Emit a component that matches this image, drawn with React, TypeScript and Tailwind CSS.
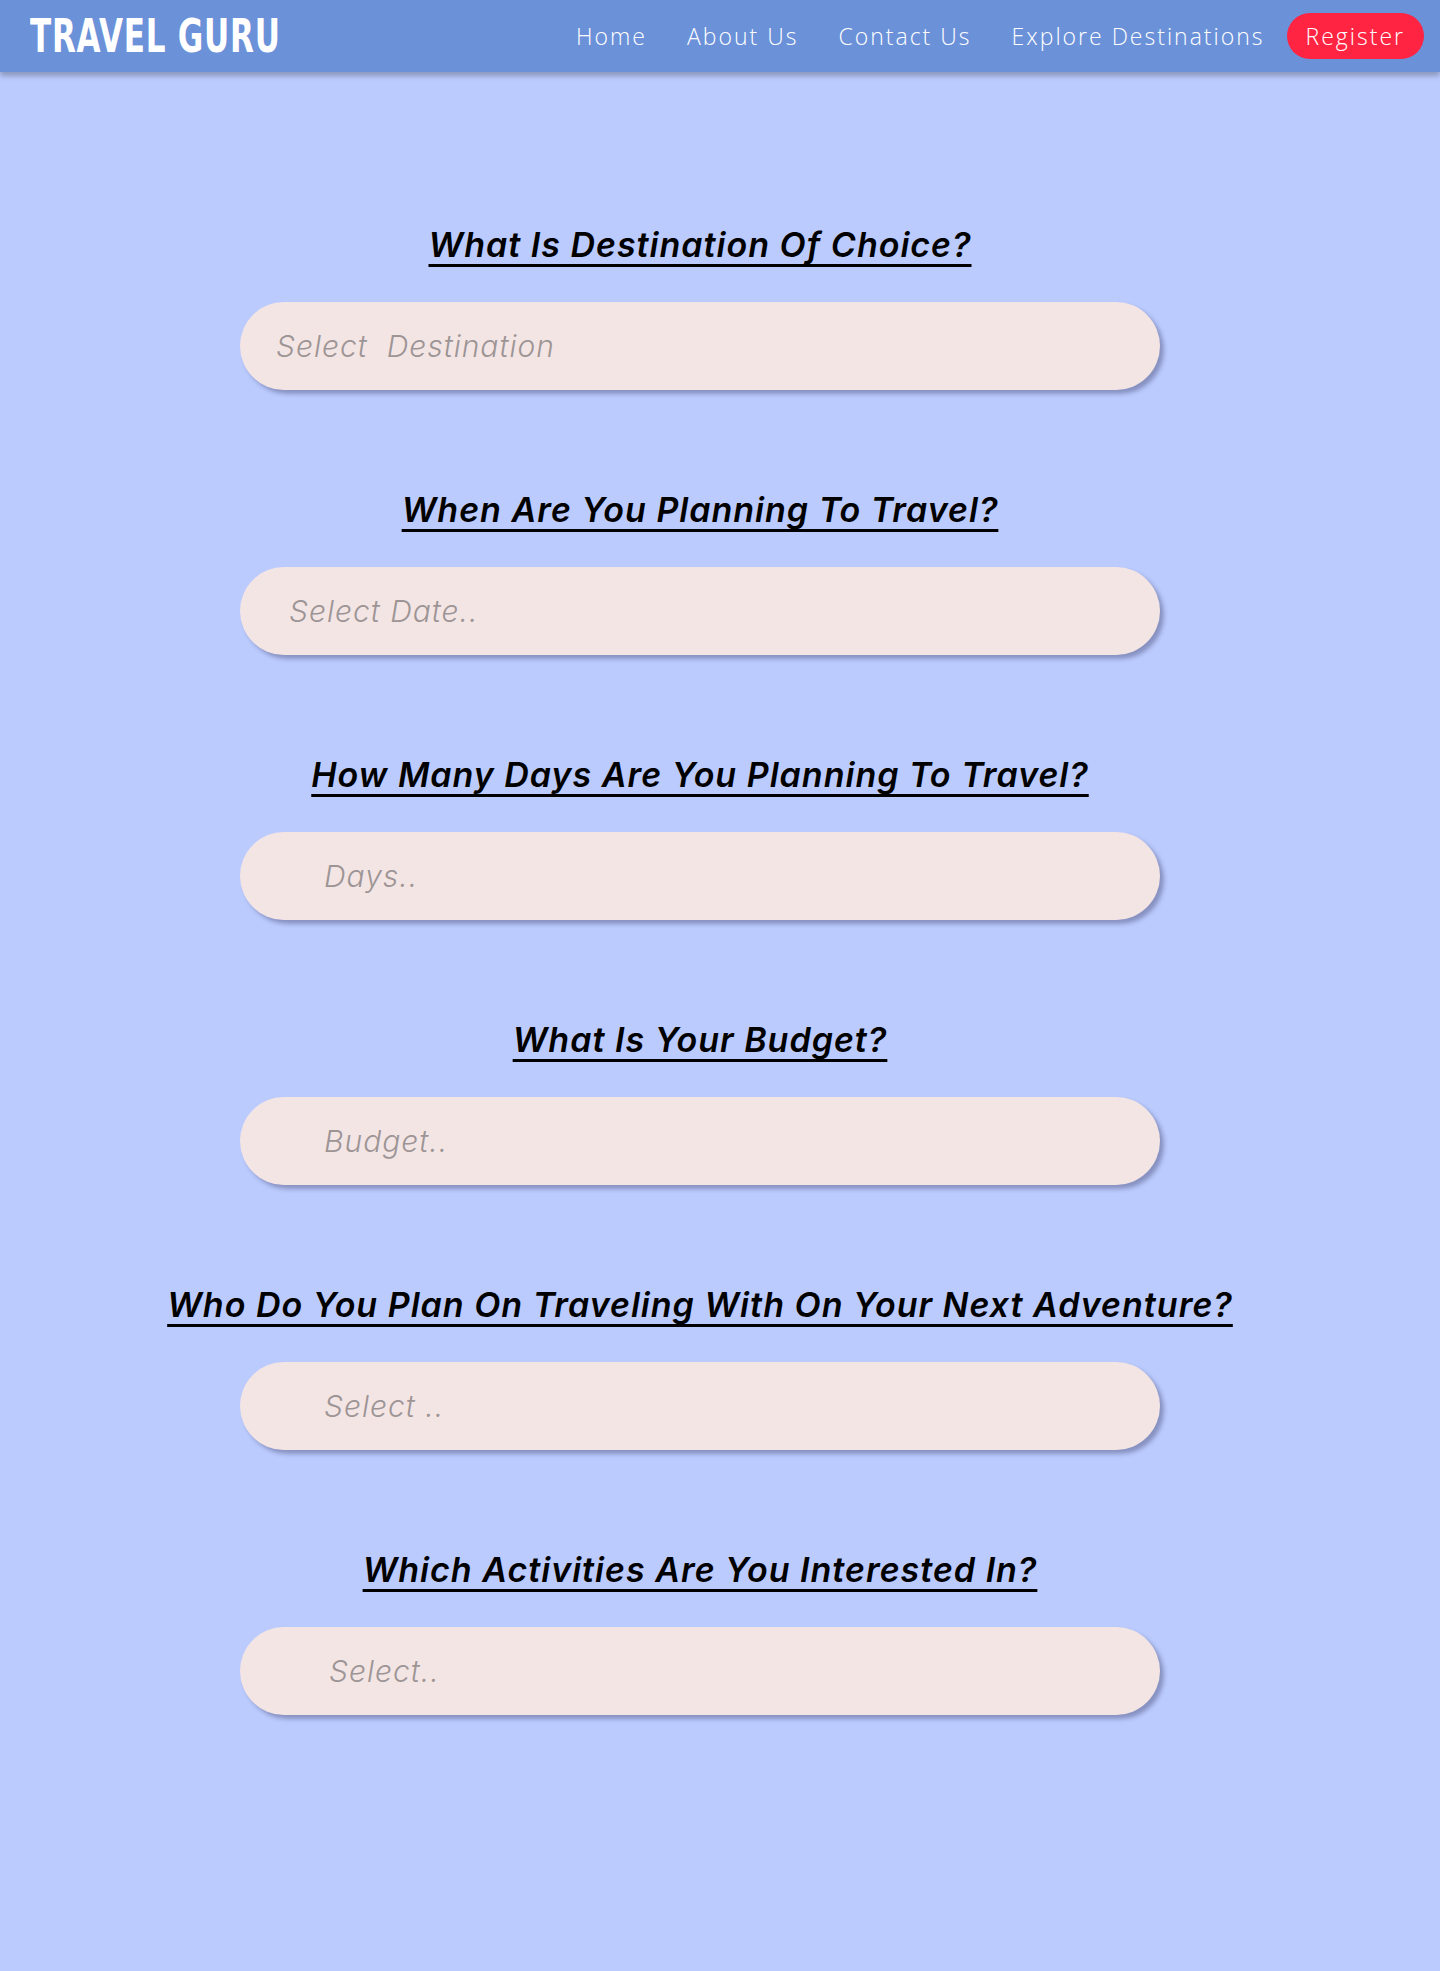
import React from "react";

type Question = {
  title: string;
  placeholder: string;
  pad: string;
};

const questions: Question[] = [
  { title: "What Is Destination Of Choice?", placeholder: "Select  Destination", pad: "pl-[36px]" },
  { title: "When Are You Planning To Travel?", placeholder: "Select Date..", pad: "pl-[49px]" },
  { title: "How Many Days Are You Planning To Travel?", placeholder: "Days..", pad: "pl-[84px]" },
  { title: "What Is Your Budget?", placeholder: "Budget..", pad: "pl-[84px]" },
  { title: "Who Do You Plan On Traveling With On Your Next Adventure?", placeholder: "Select ..", pad: "pl-[84px]" },
  { title: "Which Activities Are You Interested In?", placeholder: "Select..", pad: "pl-[89px]" },
];

const links = ["Home", "About Us", "Contact Us", "Explore Destinations"];

function Navbar() {
  return (
    <header className="flex h-[72px] items-center justify-between bg-[#6b91d9] pl-[30px] pr-[16px] shadow-[0_4px_5px_rgba(0,0,0,0.25)]">
      <div className="origin-left scale-x-[0.75] whitespace-nowrap font-['DejaVu_Sans_Condensed','DejaVu_Sans',sans-serif] text-[46px] font-bold leading-none tracking-[1px] text-white">
        TRAVEL GURU
      </div>
      <nav className="flex items-center font-['Open_Sans',sans-serif] text-[23px] font-light tracking-[2px] text-white">
        {links.map((link) => (
          <a key={link} href="#" className="px-[20px]">
            {link}
          </a>
        ))}
        <a
          href="#"
          className="ml-[2px] flex h-[46px] items-center rounded-full bg-[#ff2442] px-[19px]"
        >
          Register
        </a>
      </nav>
    </header>
  );
}

export default function App() {
  return (
    <div className="min-h-[1971px] bg-[#bbcbfe]">
      <Navbar />
      <main className="flex flex-col items-center pr-[40px] pt-[153px] font-['Inter',sans-serif]">
        {questions.map((q) => (
          <section key={q.title} className="mb-[100px] flex flex-col items-center">
            <h2 className="text-center text-[34px] font-semibold italic leading-[40px] tracking-[1px] text-black underline decoration-[3px] underline-offset-[7px]">
              {q.title}
            </h2>
            <input
              type="text"
              placeholder={q.placeholder}
              className={`mt-[37px] h-[88px] w-[920px] rounded-full bg-[#f4e5e5] ${q.pad} text-[30px] font-light italic tracking-[1px] text-gray-700 shadow-[4px_4px_4px_rgba(40,40,80,0.35)] outline-none placeholder:text-[#9d9595]`}
            />
          </section>
        ))}
      </main>
    </div>
  );
}
